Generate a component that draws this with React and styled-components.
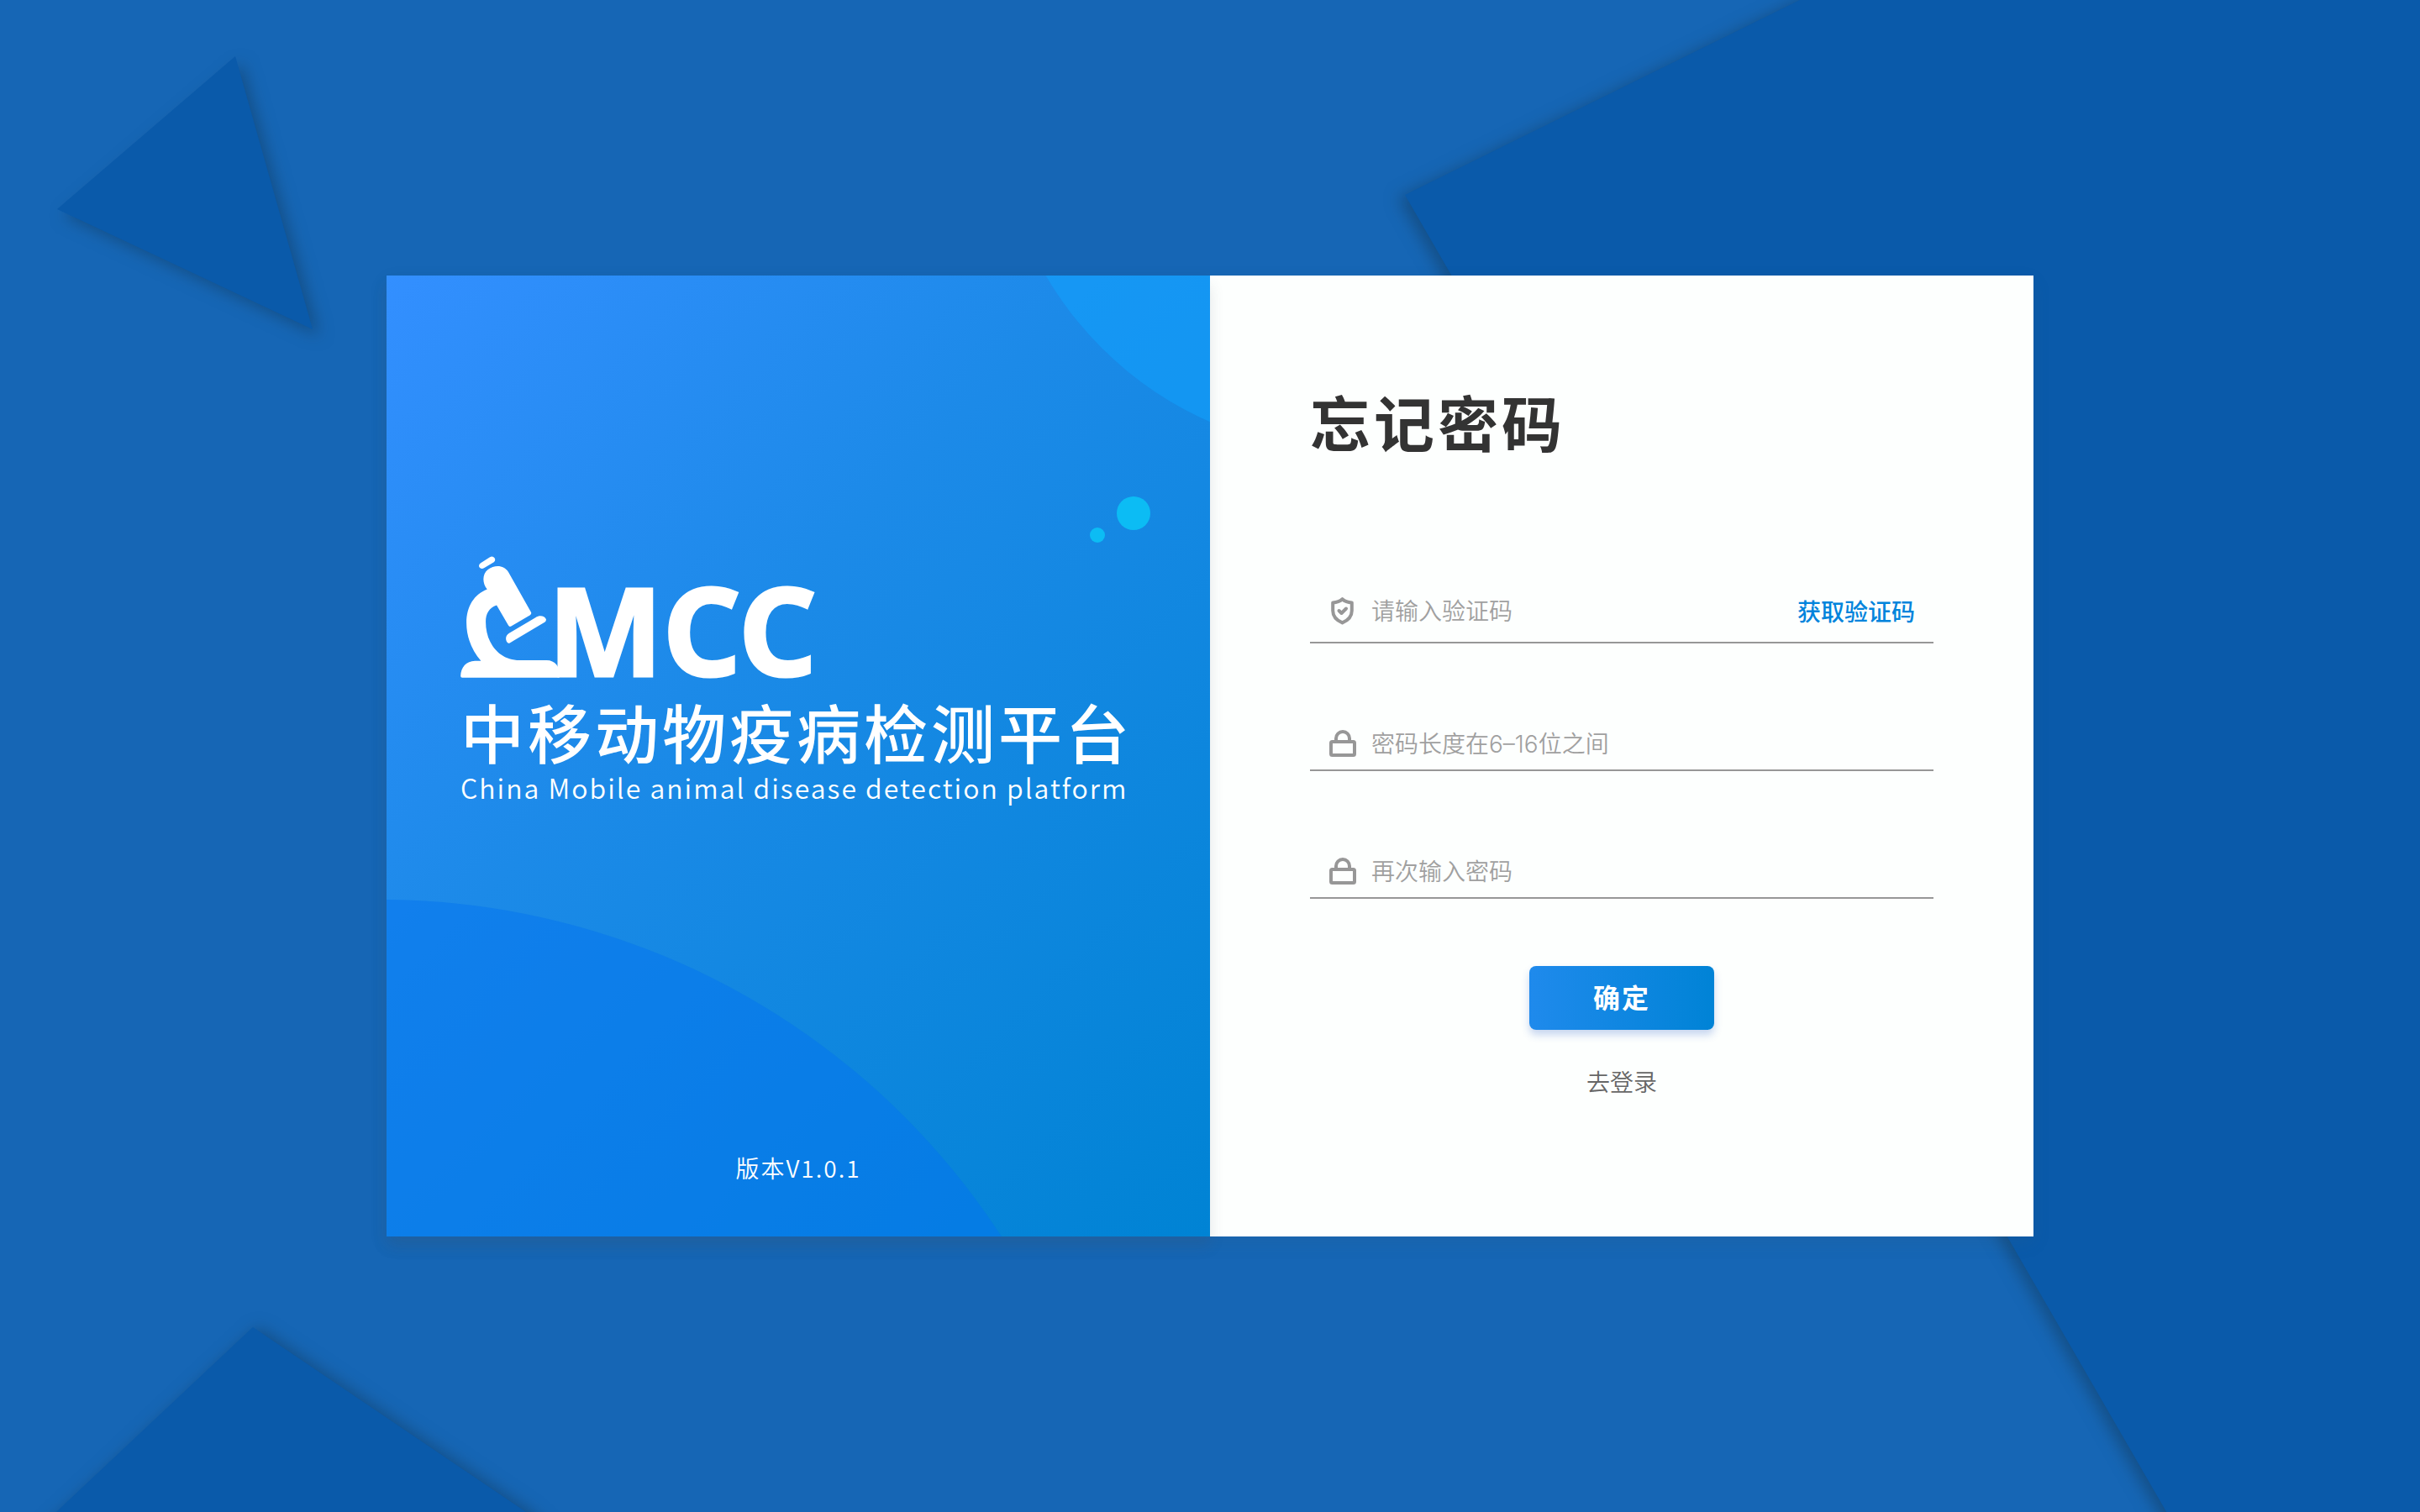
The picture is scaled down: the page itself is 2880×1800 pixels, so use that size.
import React, { useState } from "react";
import styled, { createGlobalStyle } from "styled-components";

const GlobalStyle = createGlobalStyle`
  *, *::before, *::after { box-sizing: border-box; }
  body {
    margin: 0;
    background: #1666b5;
    color: #333;
    font-family: "Noto Sans CJK SC", "Noto Sans", sans-serif;
  }
`;

const Page = styled.main`
  position: relative;
  display: flex;
  align-items: center;
  justify-content: center;
  min-height: 100vh;
  overflow: hidden;
`;

const Backdrop = styled.svg`
  position: absolute;
  inset: 0;
  width: 100%;
  height: 100%;
`;

const Card = styled.section`
  position: relative;
  display: grid;
  grid-template-columns: minmax(0, 1fr) minmax(0, 1fr);
  width: 100%;
  max-width: 1960px;
  background: #fdfffe;
  box-shadow: 0 8px 20px rgba(60, 90, 110, 0.12);
`;

const BrandPanel = styled.div`
  position: relative;
  display: flex;
  flex-direction: column;
  justify-content: space-between;
  padding: 334px 88px 62px;
  background: linear-gradient(135deg, #338fff 0%, #1c8ae8 40%, #0083d4 100%);
  box-shadow: 0 12px 16px rgba(70, 75, 90, 0.14);
`;

const PanelArt = styled.svg`
  position: absolute;
  inset: 0;
  width: 100%;
  height: 100%;
`;

const Brand = styled.div`
  position: relative;
  color: #fff;
  white-space: nowrap;
`;

const LogoRow = styled.div`
  display: flex;
  align-items: flex-end;
  height: 145px;
`;

const Microscope = styled.svg`
  flex: none;
  width: 119px;
  height: 145px;
  fill: #fff;
`;

const LogoLetters = styled.span`
  margin-left: -15px;
  font: 700 145px/116px "Noto Sans", "Open Sans", sans-serif;
  -webkit-text-stroke: 3px #fff;
  stroke-linejoin: round;
`;

const BrandName = styled.h2`
  margin: 14px 0 0;
  font-size: 76px;
  font-weight: 500;
  line-height: 98px;
  letter-spacing: 4px;
`;

const BrandSub = styled.p`
  margin: 0;
  font-size: 32px;
  font-weight: 350;
  line-height: 36px;
  letter-spacing: 2px;
`;

const Version = styled.p`
  position: relative;
  margin: 0;
  color: #fff;
  font-size: 28px;
  font-weight: 350;
  line-height: 40px;
  letter-spacing: 2px;
  text-align: center;
`;

const FormPanel = styled.form`
  display: flex;
  flex-direction: column;
  padding: 117px 119px 164px;
`;

const Title = styled.h1`
  margin: 0 0 133px;
  font-size: 72px;
  font-weight: 700;
  line-height: 112px;
  letter-spacing: 4px;
`;

const Field = styled.div`
  display: flex;
  align-items: center;
  height: ${(p) => (p.$tall ? "76px" : "64px")};
  margin-bottom: ${(p) => (p.$last ? "80px" : "88px")};
  padding: 0 22px;
  border-bottom: 2px solid #979797;
`;

const FieldIcon = styled.svg`
  flex: none;
  width: 34px;
  height: 34px;
  margin-right: 17px;
  fill: none;
  stroke: #979797;
  stroke-width: 4;
  stroke-linejoin: round;
  stroke-linecap: round;
`;

const TextInput = styled.input`
  flex: 1;
  min-width: 0;
  padding: 2px 0 0;
  border: 0;
  outline: 0;
  background: transparent;
  color: #333;
  font: 350 28px/42px Inter, "Noto Sans CJK SC", sans-serif;
  &::placeholder { color: #a0a0a0; opacity: 1; }
`;

const CodeButton = styled.button`
  padding: 0;
  border: 0;
  background: none;
  color: #0084dc;
  font: 500 28px/42px "Noto Sans CJK SC", sans-serif;
  cursor: pointer;
`;

const Submit = styled.button`
  align-self: center;
  width: 220px;
  height: 76px;
  padding: 0 0 4px;
  border: 0;
  border-radius: 8px;
  background: linear-gradient(90deg, #1f8aec, #0083d6);
  box-shadow: 0 6px 10px rgba(40, 90, 200, 0.25);
  color: #fff;
  font: 700 32px/48px "Noto Sans CJK SC", sans-serif;
  letter-spacing: 2px;
  cursor: pointer;
`;

const LoginLink = styled.a`
  align-self: center;
  margin-top: 40px;
  color: #666;
  font-size: 28px;
  font-weight: 350;
  line-height: 42px;
  text-decoration: none;
`;

function ShieldIcon() {
  return (
    <FieldIcon viewBox="0 0 34 34" aria-hidden="true">
      <path d="M16.500 3.200C13.500 6 9 7.200 5.200 7.400V17c0 6.500 4.500 11.500 11.300 14.400C23.300 28.500 27.800 23.500 27.800 17V7.400C24 7.200 19.500 6 16.500 3.200Z" />
      <path d="M12.500 17l3 3 5.500-5.500" />
    </FieldIcon>
  );
}

function LockIcon() {
  return (
    <FieldIcon viewBox="0 0 34 34" aria-hidden="true">
      <rect x="3" y="15" width="28" height="16" rx="1.500" />
      <path d="M9 14.500V11a8 8 0 0 1 16 0v3.500" />
    </FieldIcon>
  );
}

const fields = [
  { id: "code", label: "验证码", type: "text", placeholder: "请输入验证码", Icon: ShieldIcon, action: "获取验证码" },
  { id: "password", label: "新密码", type: "password", placeholder: "密码长度在6–16位之间", Icon: LockIcon },
  { id: "confirm", label: "确认密码", type: "password", placeholder: "再次输入密码", Icon: LockIcon },
];

export default function App() {
  const [values, setValues] = useState({ code: "", password: "", confirm: "" });
  const update = (e) => setValues({ ...values, [e.target.id]: e.target.value });

  return (
    <>
      <GlobalStyle />
      <Page>
        <Backdrop viewBox="0 0 2880 1800" preserveAspectRatio="xMidYMid slice" aria-hidden="true">
          <defs>
            <filter id="shade" x="-20%" y="-20%" width="140%" height="140%" colorInterpolationFilters="sRGB">
              <feDropShadow dx="8" dy="8" stdDeviation="9" floodColor="#123a5c" floodOpacity="0.5" />
            </filter>
            <filter id="shadeUp" x="-20%" y="-20%" width="140%" height="140%" colorInterpolationFilters="sRGB">
              <feDropShadow dx="7" dy="0" stdDeviation="9" floodColor="#123a5c" floodOpacity="0.5" />
            </filter>
            <filter id="shadeLeft" x="-20%" y="-20%" width="140%" height="140%" colorInterpolationFilters="sRGB">
              <feDropShadow dx="-8" dy="4" stdDeviation="9" floodColor="#123a5c" floodOpacity="0.5" />
            </filter>
          </defs>
          <polygon points="280,67 68,249 372,392" fill="#0a5aaa" filter="url(#shade)" />
          <polygon points="301,1580 67,1800 -60,1920 810,1980 626,1800" fill="#0a5aaa" filter="url(#shadeUp)" />
          <polygon points="1672,232 2142,0 2300,-78 3000,-78 3000,1950 2665,1950" fill="#0a5aaa" filter="url(#shadeLeft)" />
        </Backdrop>
        <Card>
          <BrandPanel>
            <PanelArt viewBox="0 0 980 1144" preserveAspectRatio="xMidYMid slice" aria-hidden="true">
              <circle cx="1150" cy="-213" r="423" fill="#10a4ff" fillOpacity="0.5" />
              <circle cx="-7" cy="1624" r="881" fill="#0474f0" fillOpacity="0.5" />
              <circle cx="889" cy="283" r="20" fill="#0cbcf4" />
              <circle cx="846" cy="309" r="9" fill="#0cbcf4" />
            </PanelArt>
            <Brand>
              <LogoRow>
                <Microscope viewBox="54 65 357 436" aria-hidden="true">
                  <path d="M126 90L159 69Q168 63 175 71Q181 80 173 87L139 107Q128 114 121 105Q117 96 126 90Z" />
                  <path d="M149 184C130 160 132 128 152 113C178 94 210 98 225 122L306 266Q309 272 303 276L235 316Q229 320 225 313L183 241C156 250 144 272 144 300C144 375 190 438 265 438H362C392 438 410 462 410 494Q410 500 404 500H60Q54 500 54 494C55 462 75 441 105 440H127C95 405 75 355 75 304C75 245 103 202 149 184Z" />
                  <path d="M228 341L322 285C338 275 355 280 360 291Q361 297 356 301L230 376Q223 379 219 371C213 359 217 348 228 341Z" />
                </Microscope>
                <LogoLetters>MCC</LogoLetters>
              </LogoRow>
              <BrandName>中移动物疫病检测平台</BrandName>
              <BrandSub>China Mobile animal disease detection platform</BrandSub>
            </Brand>
            <Version>版本V1.0.1</Version>
          </BrandPanel>
          <FormPanel onSubmit={(e) => e.preventDefault()}>
            <Title>忘记密码</Title>
            {fields.map(({ id, label, type, placeholder, Icon, action }, i) => (
              <Field key={id} $tall={Boolean(action)} $last={i === fields.length - 1}>
                <Icon />
                <TextInput
                  id={id}
                  type={type}
                  aria-label={label}
                  placeholder={placeholder}
                  value={values[id]}
                  onChange={update}
                />
                {action && <CodeButton type="button">{action}</CodeButton>}
              </Field>
            ))}
            <Submit type="submit">确定</Submit>
            <LoginLink href="#login">去登录</LoginLink>
          </FormPanel>
        </Card>
      </Page>
    </>
  );
}
